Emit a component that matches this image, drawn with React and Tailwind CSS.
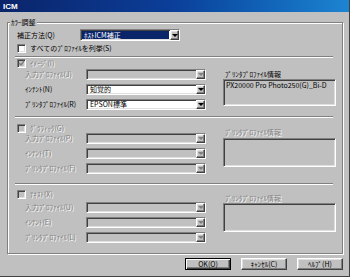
import React from "react";

const dis = "text-[#808080] [text-shadow:1px_1px_0_#fff]";
const sunken =
  "border border-t-[#808080] border-l-[#808080] border-r-white border-b-white shadow-[inset_1px_1px_0_#404040,inset_-1px_-1px_0_#dfdfdf]";
const raised =
  "border border-t-white border-l-white border-r-[#404040] border-b-[#404040] shadow-[inset_-1px_-1px_0_#808080,inset_1px_1px_0_#dfdfdf]";

const Arrow = ({ disabled }) => (
  <span
    className={`w-0 h-0 border-x-[3px] border-x-transparent border-t-[3px] ${
      disabled ? "border-t-[#808080]" : "border-t-black"
    }`}
  />
);

const Select = ({ className, value, disabled, highlight }) => (
  <div
    className={`${className} box-border flex ${sunken} ${
      disabled ? "bg-[#c0c0c0]" : "bg-white"
    }`}
  >
    <div className="flex-1 flex items-stretch p-[1px] min-w-0">
      {value && (
        <span
          className={`flex items-center px-[2px] whitespace-nowrap ${
            highlight ? "bg-[#0a246a] text-white w-full" : "text-black"
          }`}
        >
          {value}
        </span>
      )}
    </div>
    <div
      className={`box-border w-[9px] flex items-center justify-center bg-[#c0c0c0] ${raised}`}
    >
      <Arrow disabled={disabled} />
    </div>
  </div>
);

const Check = ({ checked, disabled }) => (
  <div
    className={`box-border w-[9px] h-[9px] flex items-center justify-center ${sunken} ${
      disabled ? "bg-[#c0c0c0]" : "bg-white"
    }`}
  >
    {checked && (
      <svg width="7" height="7" viewBox="0 0 7 7">
        <polyline
          points="1,3 3,5 6,1"
          fill="none"
          stroke={disabled ? "#808080" : "#000"}
          strokeWidth="1.4"
        />
      </svg>
    )}
  </div>
);

const Separator = ({ className }) => (
  <div
    className={`${className} ml-[7px] w-[318px] h-[2px] border-t border-t-[#808080] border-b border-b-white box-border`}
  />
);

const Row = ({ label, labelDisabled, value, disabled, first }) => (
  <div className={`flex items-center pl-[8px] ${first ? "" : "mt-[4px]"}`}>
    <span className={`w-[61px] whitespace-nowrap ${labelDisabled ? dis : ""}`}>
      {label}
    </span>
    <Select className="w-[120px] h-[11px]" value={value} disabled={disabled} />
  </div>
);

const Section = ({ s }) => (
  <div className={`flex pl-[9px] ${s.mt}`}>
    <div className="flex flex-col w-[189px]">
      <div className="flex items-center h-[9px]">
        <Check checked={s.checked} disabled />
        <span className={`ml-[4px] ${dis}`}>{s.title}</span>
      </div>
      <div className={s.rowsMt}>
        {s.rows.map((r, i) => (
          <Row key={i} first={i === 0} {...r} />
        ))}
      </div>
    </div>
    <div className={`ml-[17px] flex flex-col ${s.rightMt}`}>
      <span className={`h-[9px] pl-[2px] whitespace-nowrap ${s.infoDisabled ? dis : ""}`}>
        ﾌﾟﾘﾝﾀﾌﾟﾛﾌｧｲﾙ情報
      </span>
      <div
        className={`box-border w-[113px] bg-[#c0c0c0] px-[2px] py-[1px] whitespace-nowrap ${sunken} ${s.boxCls}`}
      >
        {s.info}
      </div>
    </div>
  </div>
);

const sections = [
  {
    mt: "mt-[1px]",
    rowsMt: "mt-[1px]",
    rightMt: "mt-[11px]",
    boxCls: "h-[27px]",
    title: "ｲﾒｰｼﾞ(I)",
    checked: true,
    info: "PX20000 Pro Photo250(G)_Bi-D",
    rows: [
      { label: "入力ﾌﾟﾛﾌｧｲﾙ(J)", labelDisabled: true, disabled: true },
      { label: "ｲﾝﾃﾝﾄ(N)", value: "知覚的" },
      { label: "ﾌﾟﾘﾝﾀﾌﾟﾛﾌｧｲﾙ(R)", value: "EPSON標準" },
    ],
  },
  {
    mt: "mt-[6px]",
    rowsMt: "mt-0",
    rightMt: "mt-[4px]",
    boxCls: "h-[29px] mt-[1px]",
    title: "ｸﾞﾗﾌｨｯｸ(G)",
    infoDisabled: true,
    rows: [
      { label: "入力ﾌﾟﾛﾌｧｲﾙ(P)", labelDisabled: true, disabled: true },
      { label: "ｲﾝﾃﾝﾄ(T)", labelDisabled: true, disabled: true },
      { label: "ﾌﾟﾘﾝﾀﾌﾟﾛﾌｧｲﾙ(F)", labelDisabled: true, disabled: true },
    ],
  },
  {
    mt: "mt-[5px]",
    rowsMt: "mt-[3px]",
    rightMt: "mt-[4px]",
    boxCls: "h-[29px]",
    title: "ﾃｷｽﾄ(X)",
    infoDisabled: true,
    rows: [
      { label: "入力ﾌﾟﾛﾌｧｲﾙ(U)", labelDisabled: true, disabled: true },
      { label: "ｲﾝﾃﾝﾄ(E)", labelDisabled: true, disabled: true },
      { label: "ﾌﾟﾘﾝﾀﾌﾟﾛﾌｧｲﾙ(L)", labelDisabled: true, disabled: true },
    ],
  },
];

export default function App() {
  return (
    <div className="w-[350px] h-[277px] box-border overflow-hidden bg-[#c0c0c0] border-r border-b border-[#404040] flex flex-col text-[7px] leading-[9px] text-black [font-family:'Noto_Sans_CJK_JP','Noto_Sans',sans-serif]">
      {/* title bar */}
      <div className="h-[12px] shrink-0 flex items-center pl-[3px] bg-gradient-to-r from-[#0a246a] via-[#0b3f9a] to-[#1d84d2]">
        <span className="text-white font-bold text-[8px] [font-family:'Liberation_Sans',sans-serif]">
          ICM
        </span>
      </div>

      {/* カラー調整 group */}
      <div className="relative box-border mt-[10px] ml-[7px] w-[336px] h-[232px] shrink-0 border border-[#808080] shadow-[inset_1px_1px_0_#fff,1px_1px_0_#fff]">
        <span className="absolute left-[2px] top-[-5px] px-[1px] bg-[#c0c0c0]">
          ｶﾗｰ調整
        </span>

        <div className="flex items-center mt-[6px] pl-[9px]">
          <span className="w-[63px] whitespace-nowrap">補正方法(Q)</span>
          <Select className="w-[100px] h-[12px]" value="ﾎｽﾄICM補正" highlight />
        </div>

        <div className="flex items-center h-[9px] mt-[3px] pl-[9px]">
          <Check />
          <span className="ml-[4px]">すべてのﾌﾟﾛﾌｧｲﾙを列挙(S)</span>
        </div>

        <Separator className="mt-[3px]" />
        <Section s={sections[0]} />
        <Separator className="mt-[6px]" />
        <Section s={sections[1]} />
        <Separator className="mt-[9px]" />
        <Section s={sections[2]} />
      </div>

      {/* buttons */}
      <div className="flex justify-end gap-[10px] mt-[4px] pr-[6px]">
        <button className="box-border w-[46px] h-[12px] flex items-center justify-center border border-black bg-[#c0c0c0] shadow-[inset_1px_1px_0_#fff,inset_-1px_-1px_0_#404040,inset_-2px_-2px_0_#808080]">
          OK(O)
        </button>
        <button className={`box-border w-[46px] h-[12px] flex items-center justify-center bg-[#c0c0c0] ${raised}`}>
          ｷｬﾝｾﾙ(C)
        </button>
        <button className={`box-border w-[46px] h-[12px] flex items-center justify-center bg-[#c0c0c0] ${raised}`}>
          ﾍﾙﾌﾟ(H)
        </button>
      </div>
    </div>
  );
}
